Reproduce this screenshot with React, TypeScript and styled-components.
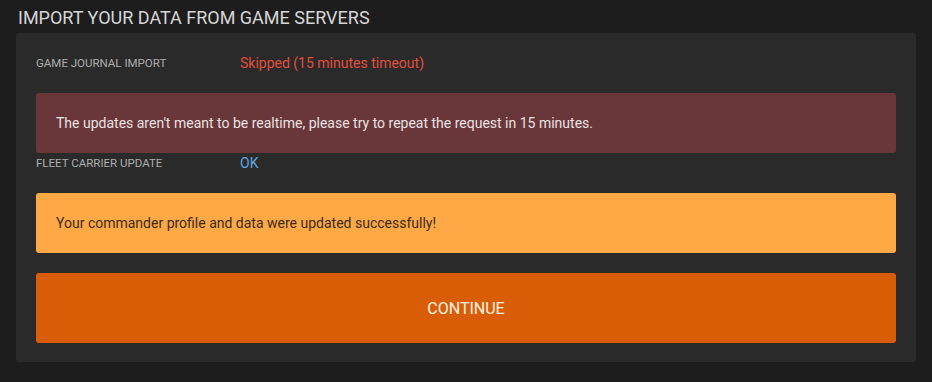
import React from 'react'
import styled, { createGlobalStyle } from 'styled-components'

const GlobalStyle = createGlobalStyle`
  html, body {
    margin: 0;
    padding: 0;
    background: #1e1d1e;
    font-family: Roboto, 'Liberation Sans', sans-serif;
  }
`

type Tone = 'danger' | 'info'
type AlertKind = 'error' | 'success'

interface StatusRowProps {
  label: string
  value: string
  tone: Tone
}

const StatusRow: React.FC<StatusRowProps> = ({ label, value, tone }) => (
  <Row>
    <Label>{label}</Label>
    <Value tone={tone}>{value}</Value>
  </Row>
)

const App: React.FC = () => {
  return (
    <Page>
      <GlobalStyle />
      <Title>Import your data from game servers</Title>
      <Card>
        <StatusRow label="Game journal import" value="Skipped (15 minutes timeout)" tone="danger" />
        <Alert kind="error">
          The updates aren't meant to be realtime, please try to repeat the request in 15 minutes.
        </Alert>
        <StatusRow label="Fleet carrier update" value="OK" tone="info" />
        <Alert kind="success">Your commander profile and data were updated successfully!</Alert>
        <ContinueButton>Continue</ContinueButton>
      </Card>
    </Page>
  )
}

const Page = styled.div`
  padding: 5px 16px 20px;
  width: 932px;
  box-sizing: border-box;
`
const Title = styled.h1`
  margin: 0 0 3px 2px;
  font-size: 18px;
  line-height: 25px;
  font-weight: 400;
  text-transform: uppercase;
  color: #d6d6d6;
`
const Card = styled.div`
  display: flex;
  flex-direction: column;
  background: #2a2a2a;
  border-radius: 3px;
  padding: 20px 20px 19px;
`
const Row = styled.div`
  display: flex;
  align-items: center;
  height: 20px;
  margin-bottom: 20px;
`
const Label = styled.div`
  width: 204px;
  font-size: 11.5px;
  color: #adadad;
  text-transform: uppercase;
`
const Value = styled.div<{ tone: Tone }>`
  font-size: 14px;
  color: ${props => (props.tone === 'danger' ? '#e2503a' : '#5fa6e2')};
`
const Alert = styled.div<{ kind: AlertKind }>`
  padding: 20px;
  line-height: 20px;
  font-size: 14px;
  border-radius: 3px;
  background: ${props => (props.kind === 'error' ? '#69373a' : '#ffa946')};
  color: ${props => (props.kind === 'error' ? '#ebe2e2' : '#3a2b1b')};
`
const ContinueButton = styled.button`
  margin-top: 20px;
  height: 70px;
  border: none;
  border-radius: 3px;
  background: #d95d06;
  color: #fff4e6;
  font-family: inherit;
  font-size: 16px;
  text-transform: uppercase;
  cursor: pointer;
`

export default App
